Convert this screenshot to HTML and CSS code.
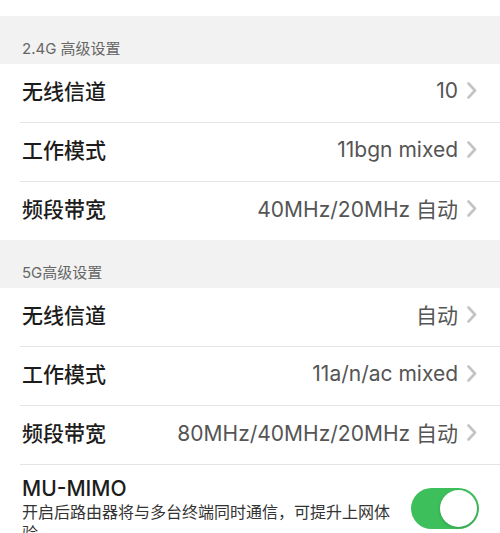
FILE: index.html
```html
<!DOCTYPE html>
<html lang="zh-CN">
<head>
    <meta charset="UTF-8">
    <meta name="viewport" content="width=device-width, initial-scale=1.0">
    <title>高级设置</title>
    <link rel="stylesheet" href="styles.css">
</head>
<body>
    <div class="top-cap"></div>

    <!-- 2.4G -->
    <div class="section-title">2.4G 高级设置</div>
    <div class="group">
        <div class="row">
            <span class="label">无线信道</span>
            <span class="value">10</span>
            <svg class="chevron" viewBox="0 0 10 17"><polyline points="1.5,1.5 8,8.5 1.5,15.5"/></svg>
        </div>
        <div class="row">
            <span class="label">工作模式</span>
            <span class="value">11bgn mixed</span>
            <svg class="chevron" viewBox="0 0 10 17"><polyline points="1.5,1.5 8,8.5 1.5,15.5"/></svg>
        </div>
        <div class="row">
            <span class="label">频段带宽</span>
            <span class="value">40MHz/20MHz 自动</span>
            <svg class="chevron" viewBox="0 0 10 17"><polyline points="1.5,1.5 8,8.5 1.5,15.5"/></svg>
        </div>
    </div>

    <!-- 5G -->
    <div class="section-title">5G高级设置</div>
    <div class="group">
        <div class="row">
            <span class="label">无线信道</span>
            <span class="value">自动</span>
            <svg class="chevron" viewBox="0 0 10 17"><polyline points="1.5,1.5 8,8.5 1.5,15.5"/></svg>
        </div>
        <div class="row">
            <span class="label">工作模式</span>
            <span class="value">11a/n/ac mixed</span>
            <svg class="chevron" viewBox="0 0 10 17"><polyline points="1.5,1.5 8,8.5 1.5,15.5"/></svg>
        </div>
        <div class="row">
            <span class="label">频段带宽</span>
            <span class="value">80MHz/40MHz/20MHz 自动</span>
            <svg class="chevron" viewBox="0 0 10 17"><polyline points="1.5,1.5 8,8.5 1.5,15.5"/></svg>
        </div>
        <div class="row switch-row">
            <div class="switch-text">
                <div class="switch-title">MU-MIMO</div>
                <div class="switch-desc">开启后路由器将与多台终端同时通信，可提升上网体验</div>
            </div>
            <div class="toggle on"><span class="knob"></span></div>
        </div>
    </div>
</body>
</html>
```

FILE: styles.css
```css
body {
    margin: 0;
    background-color: #f2f2f2;
    font-family: Inter, "Noto Sans CJK SC", sans-serif;
    overflow: hidden;
}

.top-cap {
    height: 16px;
    background-color: white;
}

.section-title {
    height: 48px;
    box-sizing: border-box;
    padding: 0 0 6px 22px;
    display: flex;
    align-items: flex-end;
    font-size: 15px;
    color: #666;
}

.group {
    background-color: white;
}

.row {
    display: flex;
    align-items: center;
    height: 58px;
    margin-left: 20px;
    padding: 0 23px 0 2px;
    border-bottom: 1px solid #e4e4e4;
}

.row > * {
    position: relative;
    top: -3px;
}

.group .row:last-child {
    border-bottom: none;
}

.label {
    flex: 1;
    font-size: 21px;
    font-weight: 500;
    color: #1c1c1c;
}

.value {
    font-size: 21px;
    color: #555;
}

.chevron {
    width: 10px;
    height: 17px;
    margin-left: 9px;
    fill: none;
    stroke: #c4c4c8;
    stroke-width: 2.6;
    stroke-linecap: round;
    stroke-linejoin: round;
}

.switch-row {
    height: auto;
    align-items: flex-start;
    padding: 11px 21px 0 2px;
}

.switch-row > * {
    top: 0;
}

.switch-text {
    flex: 1;
    padding-right: 14px;
}

.switch-title {
    font-size: 21px;
    font-weight: 500;
    color: #1c1c1c;
    line-height: 26px;
}

.switch-desc {
    font-size: 16px;
    color: #333;
    line-height: 21px;
}

.toggle {
    position: relative;
    width: 68px;
    height: 41px;
    margin-top: 12px;
    border-radius: 21px;
    background-color: #3dbf5b;
    flex-shrink: 0;
}

.knob {
    position: absolute;
    top: 2px;
    right: 2px;
    width: 37px;
    height: 37px;
    border-radius: 50%;
    background-color: white;
    box-shadow: 0 1px 3px rgba(0, 0, 0, 0.2);
}
```
